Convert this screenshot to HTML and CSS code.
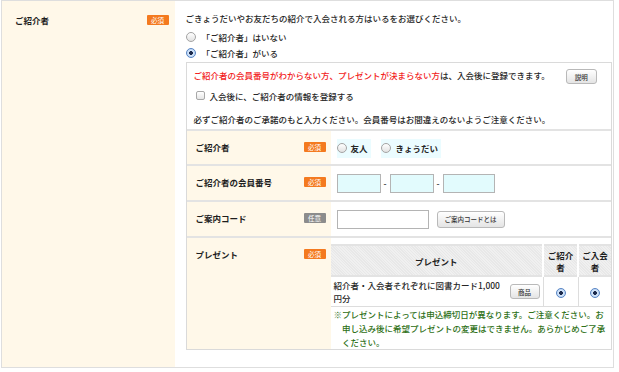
FILE: index.html
```html
<!DOCTYPE html>
<html lang="ja">
<head>
<meta charset="UTF-8">
<title>ご紹介者</title>
<link rel="stylesheet" href="styles.css">
</head>
<body>
<table class="form">
  <colgroup>
    <col class="form-head-col">
    <col>
  </colgroup>
  <tr>
    <th class="head">
      <div class="head-row">
        <span class="head-label">ご紹介者</span>
        <span class="badge">必須</span>
      </div>
    </th>
    <td class="body">
      <p class="lead">ごきょうだいやお友だちの紹介で入会される方はいるをお選びください。</p>
      <label class="choice"><span class="radio"></span>「ご紹介者」はいない</label>
      <label class="choice"><span class="radio on"></span>「ご紹介者」がいる</label>

      <div class="box">
        <div class="intro">
          <p class="later"><span class="red">ご紹介者の会員番号がわからない方、プレゼントが決まらない方</span>は、入会後に登録できます。<button class="btn btn-info">説明</button></p>
          <label class="check"><span class="checkbox"></span>入会後に、ご紹介者の情報を登録する</label>
          <p class="notice">必ずご紹介者のご承諾のもと入力ください。会員番号はお間違えのないようご注意ください。</p>
        </div>

        <table class="sub">
          <colgroup>
            <col class="sub-head-col">
            <col>
          </colgroup>
          <tr class="row-who">
            <th>
              <div class="head-row">
                <span>ご紹介者</span>
                <span class="badge">必須</span>
              </div>
            </th>
            <td>
              <label class="pick"><span class="radio"></span>友人</label>
              <label class="pick"><span class="radio"></span>きょうだい</label>
            </td>
          </tr>
          <tr class="row-num">
            <th>
              <div class="head-row">
                <span>ご紹介者の会員番号</span>
                <span class="badge">必須</span>
              </div>
            </th>
            <td>
              <input class="num" type="text"><span class="dash">-</span><input class="num" type="text"><span class="dash">-</span><input class="num num-last" type="text">
            </td>
          </tr>
          <tr class="row-code">
            <th>
              <div class="head-row">
                <span>ご案内コード</span>
                <span class="badge badge-opt">任意</span>
              </div>
            </th>
            <td>
              <input class="code" type="text"><button class="btn btn-code">ご案内コードとは</button>
            </td>
          </tr>
          <tr class="row-gift">
            <th>
              <div class="head-row">
                <span>プレゼント</span>
                <span class="badge">必須</span>
              </div>
            </th>
            <td>
              <table class="gift">
                <colgroup>
                  <col>
                  <col class="gift-col-a">
                  <col class="gift-col-b">
                </colgroup>
                <tr>
                  <th>プレゼント</th>
                  <th class="gift-col">ご紹介者</th>
                  <th class="gift-col">ご入会者</th>
                </tr>
                <tr>
                  <td>
                    <div class="gift-item">
                      <span class="gift-text">紹介者・入会者それぞれに図書カード1,000<br>円分</span>
                      <button class="btn btn-item">商品</button>
                    </div>
                  </td>
                  <td class="gift-col"><span class="radio on"></span></td>
                  <td class="gift-col"><span class="radio on"></span></td>
                </tr>
              </table>
              <p class="gift-note">※プレゼントによっては申込締切日が異なります。ご注意ください。お申し込み後に希望プレゼントの変更はできません。あらかじめご了承ください。</p>
            </td>
          </tr>
        </table>
      </div>
    </td>
  </tr>
</table>
</body>
</html>
```

FILE: styles.css
```css
body {
    margin: 0 0 0 1px;
    background: #ffffff;
    color: #262626;
    font-family: "Noto Sans CJK JP", "Noto Sans", sans-serif;
    font-size: 8.5px;
    font-weight: 500;
}

p {
    margin: 0;
}

table {
    border-collapse: collapse;
}

.form {
    width: 613px;
    table-layout: fixed;
    border: 1px solid #dedede;
}

.form-head-col {
    width: 173px;
}

.head {
    background: #fff8e9;
    vertical-align: top;
    text-align: left;
    padding: 13px 6px 0 13px;
}

.head-row {
    display: flex;
    justify-content: space-between;
    align-items: center;
    line-height: 12px;
}

.head-label,
.sub th {
    font-weight: bold;
    color: #1e1e1e;
}

.badge {
    display: inline-block;
    width: 22px;
    height: 10px;
    line-height: 10px;
    background: #f47a1f;
    color: #ffffff;
    font-size: 6.5px;
    font-weight: normal;
    text-align: center;
    border-radius: 1px;
}

.badge-opt {
    background: #8c8c8c;
}

.body {
    vertical-align: top;
    padding: 11px 1px 17px 11px;
}

.lead {
    line-height: 13px;
}

.choice {
    display: flex;
    align-items: center;
    height: 16px;
}

.choice:first-of-type {
    margin-top: 4px;
}

.radio {
    display: inline-block;
    box-sizing: border-box;
    width: 10px;
    height: 10px;
    border-radius: 50%;
    border: 1px solid #a4a4a4;
    background: linear-gradient(#ffffff, #e2e2e2);
    margin-right: 6px;
    vertical-align: middle;
}

.radio.on {
    border-color: #5a86c4;
    background: radial-gradient(circle, #1c2a4d 0 1.6px, #d6e7fb 2.2px, #a9c9f0 100%);
}

.box {
    margin-top: 1px;
    border: 1px solid #dadada;
}

.intro {
    padding: 5px 7px 2px 7px;
}

.later {
    line-height: 15px;
    white-space: nowrap;
}

.red {
    color: #f21c1c;
}

.btn {
    font-family: inherit;
    font-size: 6.5px;
    font-weight: 500;
    color: #333333;
    border: 1px solid #b9b9b9;
    border-radius: 3px;
    background: linear-gradient(#ffffff, #e4e4e4);
    padding: 0;
    vertical-align: middle;
}

.btn-info {
    width: 31px;
    height: 15px;
    margin-left: 16px;
}

.check {
    display: flex;
    align-items: center;
    height: 15px;
    margin-top: 4px;
    padding-left: 2px;
}

.checkbox {
    display: inline-block;
    box-sizing: border-box;
    width: 9px;
    height: 9px;
    border: 1px solid #a8a8a8;
    border-radius: 2px;
    background: linear-gradient(#ffffff, #e6e6e6);
    margin-right: 5px;
}

.notice {
    line-height: 15px;
    margin-top: 9px;
}

.sub {
    width: 100%;
    table-layout: fixed;
}

.sub-head-col {
    width: 144px;
}

.sub tr {
    border-top: 2px solid #e3e3e3;
}

.sub > tbody > tr > th {
    background: #fff8e9;
    vertical-align: top;
    text-align: left;
    padding: 10px 5px 0 9px;
}

.sub > tbody > tr > td {
    padding: 0 0 0 6px;
    vertical-align: middle;
}

.row-who {
    height: 35px;
}

.row-num,
.row-code {
    height: 36px;
}

.pick {
    display: inline-flex;
    align-items: center;
    height: 19px;
    padding: 0 3px 0 0;
    margin-right: 9px;
    background: #ebfcff;
    font-weight: bold;
    margin-top: 1px;
}

.pick .radio {
    margin-right: 4px;
}

.num {
    box-sizing: border-box;
    width: 44px;
    height: 19px;
    border: 1px solid #b4b4b4;
    background: #e2fbfd;
    vertical-align: middle;
    margin: 0;
}

.num-last {
    width: 52px;
}

.dash {
    display: inline-block;
    width: 9px;
    text-align: center;
    vertical-align: middle;
}

.code {
    box-sizing: border-box;
    width: 92px;
    height: 19px;
    border: 1px solid #b4b4b4;
    background: #ffffff;
    vertical-align: middle;
    margin: 0;
}

.btn-code {
    width: 68px;
    height: 17px;
    margin-left: 8px;
}

.row-gift {
    height: 108px;
}

.sub > tbody > tr.row-gift > td {
    vertical-align: top;
    padding: 6px 0 0 0;
}

.gift {
    width: 100%;
    table-layout: fixed;
}

.gift-col-a {
    width: 35px;
}

.gift-col-b {
    width: 33px;
}

.gift th {
    height: 29px;
    padding: 0;
    font-weight: bold;
    line-height: 12px;
    color: #1e1e1e;
    background: repeating-linear-gradient(45deg, #f0f0f0 0 1px, #e8e8e8 1px 2px);
    border-left: 2px solid #ffffff;
}

.gift th:first-child {
    border-left: none;
}

.gift td {
    height: 29px;
    padding: 0;
    border-bottom: 1px solid #dddddd;
    border-left: 1px solid #dddddd;
    text-align: center;
}

.gift td:first-child {
    border-left: none;
}

.gift th.gift-col {
    padding: 0 3px;
}

.gift-item {
    display: flex;
    align-items: center;
    justify-content: space-between;
    padding: 0 3px 0 3px;
    text-align: left;
    line-height: 13px;
}

.btn-item {
    width: 30px;
    height: 15px;
    flex: none;
}

.gift .radio {
    margin: 0;
}

.gift-note {
    color: #2e7016;
    line-height: 14px;
    padding: 0 2px 0 calc(3px + 1em);
    text-indent: -1em;
}
```
